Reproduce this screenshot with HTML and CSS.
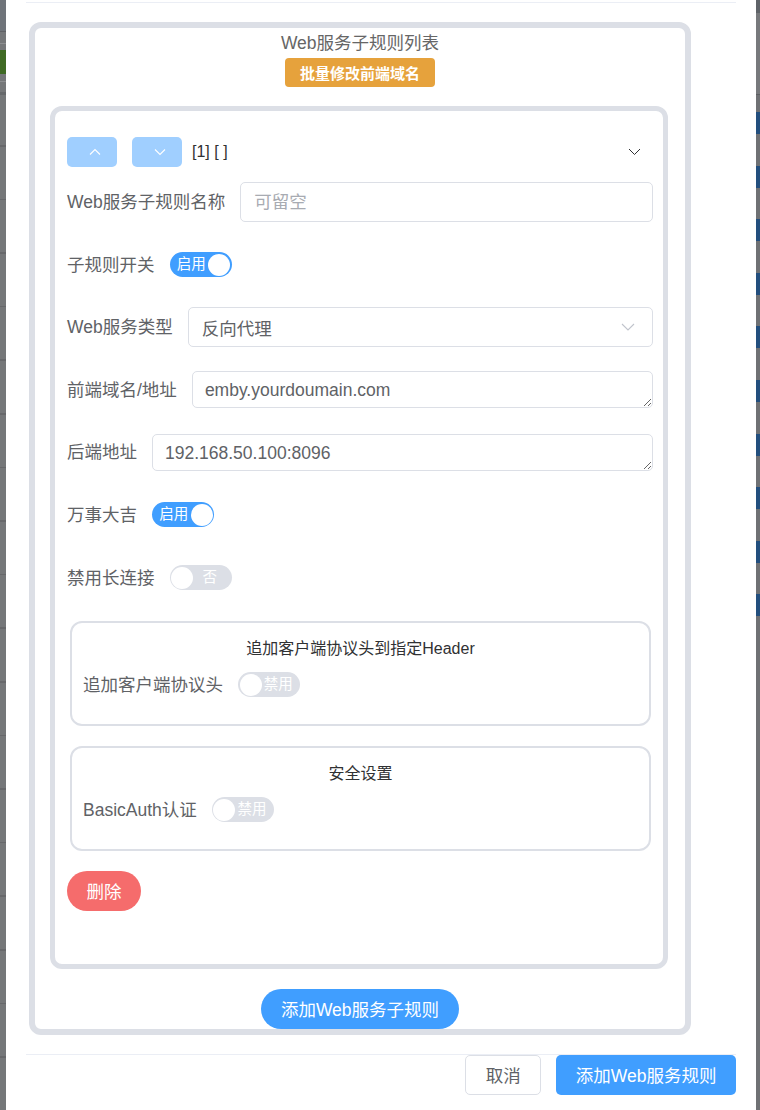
FILE: index.html
```html
<!DOCTYPE html>
<html lang="zh-CN">
  <head>
    <meta charset="UTF-8" />
    <meta name="viewport" content="width=device-width, initial-scale=1.0" />
    <title>添加Web服务规则</title>
    <link rel="stylesheet" href="styles.css">
  </head>
  <body>
    <div class="screen">
      <div class="mask-left">
        <div class="ml-top"></div>
        <div class="ml-line"></div>
        <div class="ml-gap11"></div>
        <div class="ml-light"></div>
        <div class="ml-gap6"></div>
        <div class="ml-green"></div>
        <div class="ml-gap8"></div>
        <div class="ml-light"></div>
        <div class="ml-gap10"></div>
        <div class="ml-dark"></div>
        <div class="ml-rows"></div>
      </div>

      <div class="dialog">
        <div class="dialog-head"></div>

        <div class="rule-list">
          <div class="list-title">Web服务子规则列表</div>
          <button class="btn btn-warning">批量修改前端域名</button>

          <div class="rule-card">
            <div class="rule-head">
              <button class="btn-sort">
                <svg width="12" height="8" viewBox="0 0 12 8"><path d="M1 6.5 L6 1.5 L11 6.5" fill="none" stroke="#fff" stroke-width="1.1"/></svg>
              </button>
              <button class="btn-sort">
                <svg width="12" height="8" viewBox="0 0 12 8"><path d="M1 1.5 L6 6.5 L11 1.5" fill="none" stroke="#fff" stroke-width="1.1"/></svg>
              </button>
              <span class="rule-name">[1] [ ]</span>
              <svg class="collapse-arrow" width="13" height="8" viewBox="0 0 13 8"><path d="M1 1 L6.5 6.5 L12 1" fill="none" stroke="#303133" stroke-width="1"/></svg>
            </div>

            <div class="rule-form">
              <div class="form-item">
                <label class="form-label">Web服务子规则名称</label>
                <input class="field" type="text" placeholder="可留空" />
              </div>
              <div class="form-item">
                <label class="form-label">子规则开关</label>
                <span class="switch"><span class="switch-text">启用</span><span class="switch-knob"></span></span>
              </div>
              <div class="form-item">
                <label class="form-label">Web服务类型</label>
                <div class="field select">
                  <span>反向代理</span>
                  <svg width="14" height="8" viewBox="0 0 14 8"><path d="M1 1 L7 7 L13 1" fill="none" stroke="#c0c4cc" stroke-width="1.1"/></svg>
                </div>
              </div>
              <div class="form-item">
                <label class="form-label">前端域名/地址</label>
                <textarea class="field field-area" rows="1">emby.yourdoumain.com</textarea>
              </div>
              <div class="form-item">
                <label class="form-label">后端地址</label>
                <textarea class="field field-area" rows="1">192.168.50.100:8096</textarea>
              </div>
              <div class="form-item">
                <label class="form-label">万事大吉</label>
                <span class="switch"><span class="switch-text">启用</span><span class="switch-knob"></span></span>
              </div>
              <div class="form-item">
                <label class="form-label">禁用长连接</label>
                <span class="switch off"><span class="switch-knob"></span><span class="switch-text">否</span></span>
              </div>
            </div>

            <div class="sub-card">
              <div class="sub-title">追加客户端协议头到指定Header</div>
              <div class="form-item sub-row">
                <label class="form-label">追加客户端协议头</label>
                <span class="switch off"><span class="switch-knob"></span><span class="switch-text">禁用</span></span>
              </div>
            </div>

            <div class="sub-card">
              <div class="sub-title">安全设置</div>
              <div class="form-item sub-row">
                <label class="form-label">BasicAuth认证</label>
                <span class="switch off"><span class="switch-knob"></span><span class="switch-text">禁用</span></span>
              </div>
            </div>

            <div class="rule-actions">
              <button class="btn btn-danger btn-round">删除</button>
            </div>
          </div>

          <button class="btn btn-primary btn-round btn-add-sub">添加Web服务子规则</button>
        </div>

        <div class="dialog-foot">
          <button class="btn btn-default">取消</button>
          <button class="btn btn-primary">添加Web服务规则</button>
        </div>
      </div>

      <div class="mask-right">
        <div class="mr-top"></div>
        <div class="mr-band"></div>
        <div class="mr-line"></div>
        <div class="mr-gap"></div>
        <div class="mr-tiles"></div>
      </div>
    </div>
  </body>
</html>
```

FILE: styles.css
```css
* {
  box-sizing: border-box;
}
body {
  margin: 0;
  overflow: hidden;
  font-family: "Liberation Sans", "Noto Sans CJK SC", sans-serif;
  background-color: #737579;
}
.screen {
  display: flex;
  height: 1110px;
}

/* masked page behind the dialog */
.mask-left {
  width: 6px;
  display: flex;
  flex-direction: column;
  background-color: #757779;
}
.ml-top {
  height: 31px;
  background-color: #6f747a;
}
.ml-line {
  height: 1px;
  background-color: #5f6165;
}
.ml-gap11 {
  height: 11px;
}
.ml-gap6 {
  height: 6px;
}
.ml-gap8 {
  height: 7px;
}
.ml-gap10 {
  height: 10px;
}
.ml-light {
  height: 1px;
  background-color: #8c8e90;
}
.ml-green {
  height: 24px;
  background-color: #3f6a24;
}
.ml-dark {
  height: 3px;
  background-color: #66686b;
}
.ml-rows {
  flex: 1;
  background: repeating-linear-gradient(
    to bottom,
    #757779 0,
    #757779 50px,
    #67686b 50px,
    #67686b 51.6px,
    #757779 51.6px,
    #757779 53.6px
  );
}
.mask-right {
  width: 4px;
  display: flex;
  flex-direction: column;
  background-color: #6f7174;
}
.mr-top {
  height: 13px;
  background-color: #5f6368;
}
.mr-band {
  height: 81px;
  background-color: #77797c;
}
.mr-line {
  height: 1px;
  background-color: #5d5f62;
}
.mr-gap {
  height: 17px;
}
.mr-tiles {
  height: 536px;
  background: repeating-linear-gradient(
    to bottom,
    #234f7e 0,
    #234f7e 22px,
    #6f7174 22px,
    #6f7174 53.6px
  );
}

/* dialog */
.dialog {
  width: 750px;
  background-color: #fff;
  padding: 0 20px;
}
.dialog-head {
  height: 3px;
  border-bottom: 1px solid #ebeef5;
}
.rule-list {
  width: 662px;
  margin: 19px 0 0 3px;
  padding-top: 3px;
  border: 6px solid #dcdfe6;
  border-radius: 12px;
  display: flex;
  flex-direction: column;
  align-items: center;
}
.list-title {
  font-size: 17.5px;
  line-height: 24px;
  color: #666;
}
.rule-card {
  align-self: stretch;
  margin: 19px 17px 0 15px;
  padding: 26px 10px 53px 12px;
  border: 5px solid #dcdfe6;
  border-radius: 12px;
}
.rule-head {
  height: 30px;
  display: flex;
  align-items: center;
}
.btn-sort {
  width: 50px;
  height: 30px;
  margin-right: 15px;
  padding: 0 0 0 5px;
  border: 0;
  border-radius: 5px;
  background-color: #a0cfff;
  display: flex;
  align-items: center;
  justify-content: center;
}
.btn-sort + .btn-sort {
  margin-right: 10px;
}
.rule-name {
  font-size: 16px;
  color: #303133;
}
.collapse-arrow {
  margin-left: auto;
  margin-right: 12px;
}
.rule-form {
  margin-top: 15px;
  display: flex;
  flex-direction: column;
  gap: 22.6px;
}
.form-item {
  height: 40px;
  display: flex;
  align-items: center;
}
.form-label {
  padding-right: 15px;
  font-size: 17.5px;
  line-height: 40px;
  color: #606266;
  white-space: nowrap;
}
.field {
  flex: 1;
  height: 40px;
  padding: 0 13px;
  border: 1px solid #dcdfe6;
  border-radius: 5px;
  outline: 0;
  background-color: #fff;
  font-family: inherit;
  font-size: 17.5px;
  color: #606266;
}
.field::placeholder {
  color: #a8abb2;
}
.select {
  padding-right: 17px;
  display: flex;
  align-items: center;
  justify-content: space-between;
}
.field-area {
  height: 37px;
  padding: 6px 12px 4px;
  line-height: 24px;
  resize: vertical;
  overflow: hidden;
}

/* switch */
.switch {
  width: 62px;
  height: 25px;
  padding: 0 1.5px 0 5px;
  border-radius: 13px;
  background-color: #409eff;
  color: #fff;
  font-size: 14.5px;
  display: inline-flex;
  align-items: center;
}
.switch.off {
  padding: 0 5px 0 1.5px;
  background-color: #dcdfe6;
}
.switch-text {
  flex: 1;
  text-align: center;
  line-height: 25px;
}
.switch-knob {
  width: 22px;
  height: 22px;
  border-radius: 50%;
  background-color: #fff;
}

.sub-card {
  margin: 23px 2px 0 3px;
  padding: 15px 11px 19px;
  border: 2px solid #dcdfe6;
  border-radius: 12px;
}
.sub-card + .sub-card {
  margin-top: 20px;
}
.sub-title {
  text-align: center;
  font-size: 16px;
  line-height: 22px;
  color: #303133;
}
.sub-row {
  margin-top: 5px;
}
.rule-actions {
  margin-top: 20px;
  display: flex;
}

/* buttons */
.btn {
  height: 40px;
  padding: 0 19.5px;
  border: 0;
  border-radius: 5px;
  font-family: inherit;
  font-size: 17.5px;
  color: #fff;
  cursor: pointer;
  display: inline-flex;
  align-items: center;
  justify-content: center;
}
.btn-primary {
  background-color: #409eff;
}
.btn-danger {
  background-color: #f56c6c;
}
.btn-round {
  border-radius: 20px;
}
.btn-default {
  background-color: #fff;
  border: 1px solid #dcdfe6;
  color: #606266;
}
.btn-warning {
  height: 29px;
  margin-top: 3px;
  padding: 0 14.5px;
  border-radius: 4px;
  background-color: #e6a23c;
  font-size: 15px;
  font-weight: bold;
}
.btn-add-sub {
  margin-top: 20px;
}
.dialog-foot {
  margin-top: 19px;
  border-top: 1px solid #ebeef5;
  display: flex;
  justify-content: flex-end;
  gap: 15px;
}
```
